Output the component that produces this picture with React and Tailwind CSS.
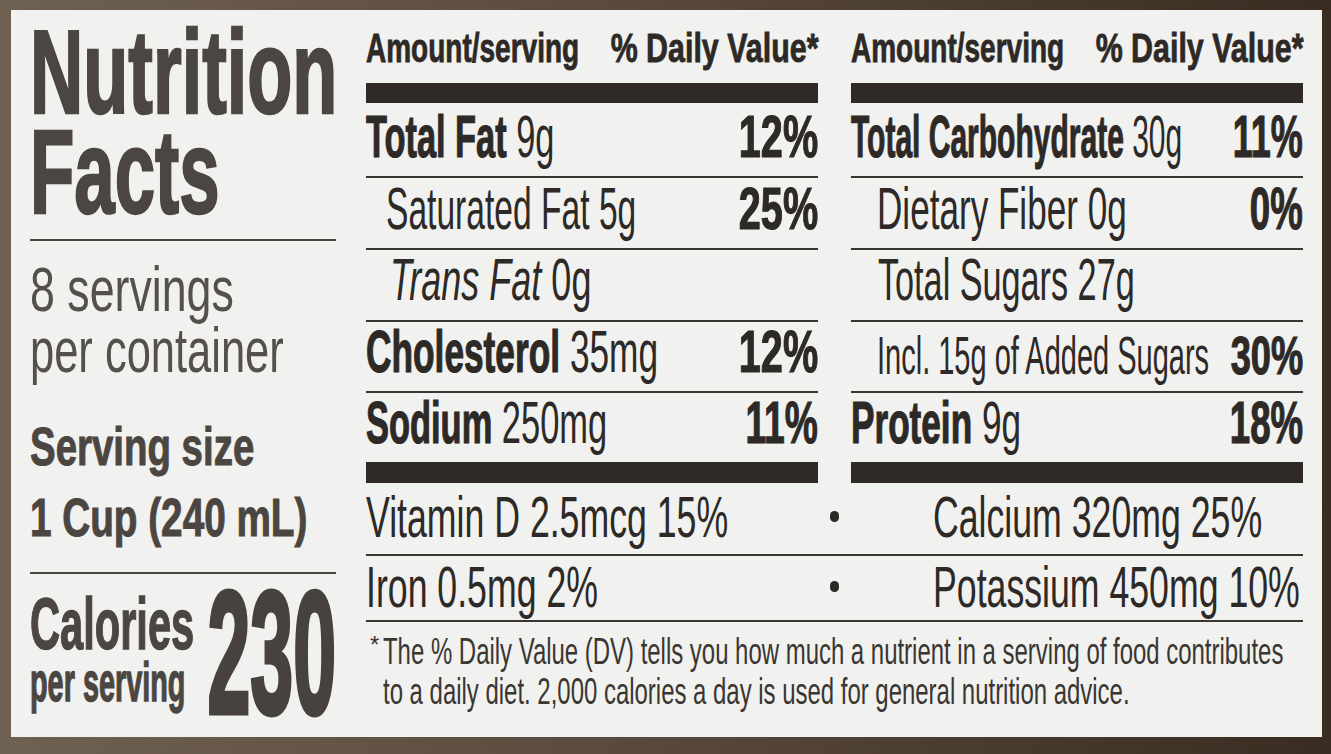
import React from "react";

const T = ({ c = "", children }) => (
  <span className={"inline-block whitespace-nowrap " + c}>{children}</span>
);

const B = ({ children }) => (
  <b className="font-bold [-webkit-text-stroke:1.2px_currentColor]">{children}</b>
);

const Line = () => <div className="h-[2px] bg-[#3a3531]" />;

const Row = ({ c, label, pct }) => (
  <div className={"flex items-start leading-none " + c}>
    <div className="flex-1 min-w-0">{label}</div>
    {pct ? <div className="shrink-0 flex justify-end">{pct}</div> : null}
  </div>
);

const Col = ({ children }) => (
  <div className="w-[452px] shrink-0 flex flex-col">
    <div className="h-[73px] pt-[18px] flex text-[40px] leading-none font-bold [-webkit-text-stroke:0.8px_currentColor]">
      <div className="flex-1 min-w-0">
        <T c="scale-x-[0.70] origin-left">Amount/serving</T>
      </div>
      <div className="flex-1 min-w-0 flex justify-end">
        <T c="scale-x-[0.76] origin-right">% Daily Value*</T>
      </div>
    </div>
    <div className="h-[20px] bg-[#2f2a27]" />
    {children}
    <div className="h-[21px] bg-[#2f2a27]" />
  </div>
);

function Left() {
  return (
    <div className="w-[306px] ml-[19px] shrink-0 flex flex-col text-[#4b4641]">
      <div className="pt-[12px] font-bold text-[119px] leading-[100px] [-webkit-text-stroke:2.5px_currentColor]">
        <div>
          <T c="scale-x-[0.62] origin-left">Nutrition</T>
        </div>
        <div>
          <T c="scale-x-[0.61] origin-left">Facts</T>
        </div>
      </div>
      <div className="mt-[17px] h-[2px] bg-[#4a4540]" />
      <div className="mt-[18px] text-[63px] leading-[61px] text-[#55504b]">
        <div>
          <T c="scale-x-[0.71] origin-left">8 servings</T>
        </div>
        <div>
          <T c="scale-x-[0.69] origin-left">per container</T>
        </div>
      </div>
      <div className="mt-[30px] text-[53px] leading-[71px] font-bold [-webkit-text-stroke:1px_currentColor]">
        <div>
          <T c="scale-x-[0.725] origin-left">Serving size</T>
        </div>
        <div>
          <T c="scale-x-[0.73] origin-left">1 Cup (240 mL)</T>
        </div>
      </div>
      <div className="mt-[19px] h-[2px] bg-[#4a4540]" />
      <div className="flex">
        <div className="w-[175px] shrink-0 pt-[22px] font-bold [-webkit-text-stroke:1.4px_currentColor]">
          <div className="text-[73px] leading-[56px]">
            <T c="scale-x-[0.57] origin-left">Calories</T>
          </div>
          <div className="mt-[3px] text-[56px] leading-[54px]">
            <T c="scale-x-[0.515] origin-left">per serving</T>
          </div>
        </div>
        <div className="flex-1 min-w-0 flex justify-end pt-[9px] text-[175px] leading-[140px] font-bold text-[#47423d] [-webkit-text-stroke:5px_currentColor]">
          <T c="scale-x-[0.44] origin-right">230</T>
        </div>
      </div>
    </div>
  );
}

const P = ({ c, children }) => (
  <T c={"font-bold [-webkit-text-stroke:1.2px_currentColor] " + c}>{children}</T>
);

const Dot = () => (
  <div className="w-[33px] shrink-0 flex justify-center pt-[23px]">
    <div className="w-[9px] h-[11px] rounded-full bg-[#2d2926]" />
  </div>
);

function Right() {
  return (
    <div className="ml-[30px] w-[937px] shrink-0 flex flex-col text-[#2d2926]">
      <div className="flex gap-[33px]">
        <Col>
          <Row
            c="h-[73px] pt-[4px] text-[60px]"
            label={
              <T c="scale-x-[0.573] origin-left">
                <B>Total Fat</B> 9g
              </T>
            }
            pct={<P c="scale-x-[0.66] origin-right">12%</P>}
          />
          <Line />
          <Row
            c="h-[70px] pt-[1px] pl-[20px] text-[60px]"
            label={<T c="scale-x-[0.56] origin-left">Saturated Fat 5g</T>}
            pct={<P c="scale-x-[0.66] origin-right">25%</P>}
          />
          <Line />
          <Row
            c="h-[70px] pl-[24px] text-[60px]"
            label={
              <T c="scale-x-[0.60] origin-left">
                <i>Trans Fat</i> 0g
              </T>
            }
          />
          <Line />
          <Row
            c="h-[69px] text-[60px]"
            label={
              <T c="scale-x-[0.588] origin-left">
                <B>Cholesterol</B> 35mg
              </T>
            }
            pct={<P c="scale-x-[0.66] origin-right">12%</P>}
          />
          <Line />
          <Row
            c="h-[69px] text-[60px]"
            label={
              <T c="scale-x-[0.574] origin-left">
                <B>Sodium</B> 250mg
              </T>
            }
            pct={<P c="scale-x-[0.62] origin-right">11%</P>}
          />
        </Col>
        <Col>
          <Row
            c="h-[73px] pt-[4px] text-[60px]"
            label={
              <T c="scale-x-[0.50] origin-left">
                <B>Total Carbohydrate</B> 30g
              </T>
            }
            pct={<P c="scale-x-[0.60] origin-right">11%</P>}
          />
          <Line />
          <Row
            c="h-[70px] pt-[1px] pl-[26px] text-[60px]"
            label={<T c="scale-x-[0.585] origin-left">Dietary Fiber 0g</T>}
            pct={<P c="scale-x-[0.61] origin-right">0%</P>}
          />
          <Line />
          <Row
            c="h-[70px] pl-[27px] text-[60px]"
            label={<T c="scale-x-[0.57] origin-left">Total Sugars 27g</T>}
          />
          <Line />
          <Row
            c="h-[69px] pt-[6px] pl-[26px] text-[54px]"
            label={<T c="scale-x-[0.537] origin-left">Incl. 15g of Added Sugars</T>}
            pct={<P c="scale-x-[0.67] origin-right">30%</P>}
          />
          <Line />
          <Row
            c="h-[69px] text-[60px]"
            label={
              <T c="scale-x-[0.586] origin-left">
                <B>Protein</B> 9g
              </T>
            }
            pct={<P c="scale-x-[0.61] origin-right">18%</P>}
          />
        </Col>
      </div>

      <div className="h-[71px] pt-[5px] flex items-start text-[58px] leading-none">
        <div className="w-[452px] shrink-0">
          <T c="scale-x-[0.615] origin-left">Vitamin D 2.5mcg 15%</T>
        </div>
        <Dot />
        <div className="flex-1 min-w-0 pl-[82px]">
          <T c="scale-x-[0.615] origin-left">Calcium 320mg 25%</T>
        </div>
      </div>
      <Line />
      <div className="h-[64px] pt-[2px] flex items-start text-[58px] leading-none">
        <div className="w-[452px] shrink-0">
          <T c="scale-x-[0.615] origin-left">Iron 0.5mg 2%</T>
        </div>
        <Dot />
        <div className="flex-1 min-w-0 pl-[82px]">
          <T c="scale-x-[0.615] origin-left">Potassium 450mg 10%</T>
        </div>
      </div>
      <Line />
      <div className="pt-[10px] text-[37px] leading-[40px] text-[#3a3632]">
        <div className="flex items-start">
          <span className="w-[17px] shrink-0 pl-[4px] text-[24px] leading-[26px]">*</span>
          <T c="scale-x-[0.647] origin-left">
            The % Daily Value (DV) tells you how much a nutrient in a serving of food contributes
          </T>
        </div>
        <div className="pl-[17px]">
          <T c="scale-x-[0.647] origin-left">
            to a daily diet. 2,000 calories a day is used for general nutrition advice.
          </T>
        </div>
      </div>
    </div>
  );
}

export default function App() {
  return (
    <div className="w-[1331px] h-[754px] overflow-hidden bg-[linear-gradient(90deg,#6f6151_0%,#5a4b3e_45%,#3b2c21_100%)] pt-[10px] pl-[11px] pr-[9px] pb-[17px] font-['Liberation_Sans',Arial,sans-serif]">
      <div className="h-full bg-[#f1f1ef] flex">
        <Left />
        <Right />
      </div>
    </div>
  );
}
